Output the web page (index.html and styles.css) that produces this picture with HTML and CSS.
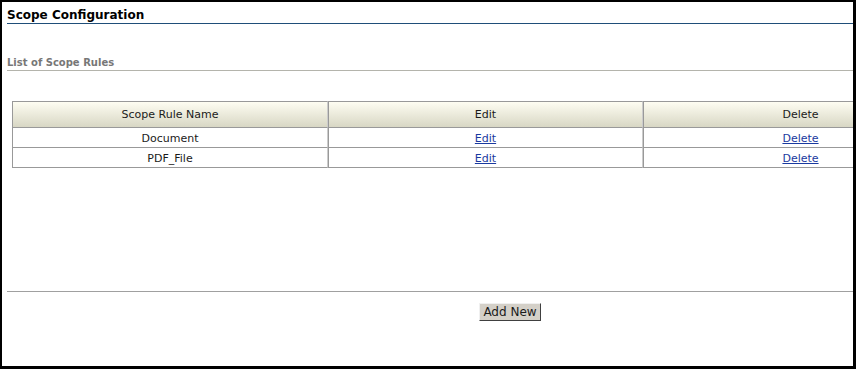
FILE: index.html
```html
<!DOCTYPE html>
<html lang="en">
<head>
    <meta charset="UTF-8">
    <title>Scope Configuration</title>
    <link rel="stylesheet" href="styles.css">
</head>
<body>
    <div class="frame">
        <div class="page-title">Scope Configuration</div>
        <div class="section-title">List of Scope Rules</div>

        <table class="rules-table">
            <colgroup>
                <col class="col-name">
                <col class="col-edit">
                <col class="col-delete">
            </colgroup>
            <thead>
                <tr>
                    <th>Scope Rule Name</th>
                    <th>Edit</th>
                    <th>Delete</th>
                </tr>
            </thead>
            <tbody>
                <tr>
                    <td>Document</td>
                    <td><a href="#">Edit</a></td>
                    <td><a href="#">Delete</a></td>
                </tr>
                <tr>
                    <td>PDF_File</td>
                    <td><a href="#">Edit</a></td>
                    <td><a href="#">Delete</a></td>
                </tr>
            </tbody>
        </table>

        <div class="actions">
            <button class="button">Add New</button>
        </div>
    </div>
</body>
</html>
```

FILE: styles.css
```css
* { margin: 0; padding: 0; box-sizing: border-box; }
body { font-family: 'DejaVu Sans', Verdana, sans-serif; background: #ffffff; color: #1a1a1a; }

.frame {
    height: 369px; width: 856px; overflow: hidden;
    border: solid #000000; border-width: 2px 3px 3px 2px;
    padding-left: 5px;
}
.page-title {
    font-size: 12px; font-weight: bold; line-height: 16px;
    padding-top: 5px; border-bottom: 1px solid #1f4e79; color: #000000;
}
.section-title {
    margin-top: 32px; font-size: 10px; font-weight: bold; line-height: 13px;
    padding-bottom: 1px; color: #777777; border-bottom: 1px solid #b4b4ac;
}

.rules-table {
    margin: 30px 0 0 5px; width: 946px; table-layout: fixed;
    border-collapse: separate; border-spacing: 0; font-size: 11px;
}
.col-name { width: 316px; }
.col-edit { width: 315px; }
.col-delete { width: 315px; }
.rules-table th, .rules-table td {
    text-align: center; font-weight: normal;
    border-left: 1px solid #999999; border-right: 1px solid #cccccc; border-bottom: 1px solid #999999;
}
.rules-table th {
    height: 27px; border-top: 1px solid #999999; color: #1a1a1a;
    background: linear-gradient(#fefdf2, #d8d7c4);
}
.rules-table td { height: 20px; padding-top: 1px; color: #1a1a1a; }
.rules-table a { color: #1a3aa0; }

.actions {
    margin-top: 123px; border-top: 1px solid #a0a0a0;
    padding: 9px 0 0 472px;
}
.button {
    font-family: 'DejaVu Sans', Verdana, sans-serif; font-size: 12px; color: #1a1a1a;
    height: 18px; width: 62px; line-height: 14px; padding: 0;
    background: #d4d0c8; border: 1px solid; border-color: #f0f0f0 #404040 #404040 #f0f0f0;
}
```
